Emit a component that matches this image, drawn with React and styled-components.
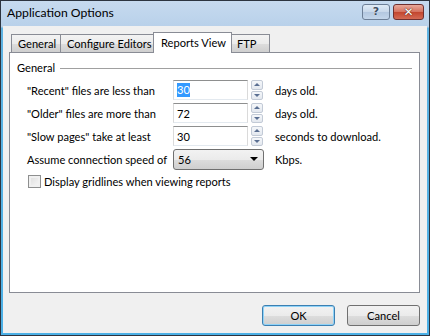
import React from 'react';
import styled, { createGlobalStyle, css } from 'styled-components';

const Global = createGlobalStyle`
  html, body { margin: 0; padding: 0; background: #fff; }
  body {
    font-family: Lato, "Noto Sans", sans-serif;
    font-size: 11.1px;
    color: #000;
    white-space: nowrap;
  }
`;

const Window = styled.div`
  width: 430px;
  height: 336px;
  box-sizing: border-box;
  border: 1px solid #2c3440;
  background: linear-gradient(#c2d7ee, #b7cfe9 26px, #5fb3e2 27px, #4cb0e6);
  display: flex;
  flex-direction: column;
  overflow: hidden;
`;

const TitleBar = styled.div`
  height: 25px;
  display: flex;
  align-items: center;
  padding: 0 5px 0 6px;
  background: linear-gradient(#c6daef, #b9d1ea);
`;

const Title = styled.div`
  flex: 1;
  font-size: 12.2px;
  margin-top: -2px;
`;

const CaptionButton = styled.div`
  height: 16px;
  box-sizing: border-box;
  border: 1px solid #6d7f97;
  border-radius: 3px;
  display: flex;
  align-items: center;
  justify-content: center;
  margin-top: -4px;
  font-weight: bold;
  font-family: "DejaVu Sans", sans-serif;
  ${p => p.$close ? css`
    width: 31px;
    margin-left: 3px;
    border-color: #6e3030;
    background: linear-gradient(#e9a99a, #d4705e 50%, #c2452e 51%, #d46a54);
    color: #fff;
    font-size: 12px;
    text-shadow: 0 0 1px #4a1a10, 0 0 1px #4a1a10;
  ` : css`
    width: 28px;
    background: linear-gradient(#e0ebf6, #c7d7ea 50%, #b3c7e0 51%, #c4d6eb);
    color: #3e4d62;
    font-size: 11px;
    text-shadow: 0 0 1px #fff;
  `}
`;

const Client = styled.div`
  flex: 1;
  margin: 0 2px 2px 2px;
  background: #f0f0f0;
  display: flex;
  flex-direction: column;
  padding: 6px 7px 7px 6px;
`;

const TabRow = styled.div`
  display: flex;
  align-items: flex-end;
  height: 20px;
  padding-left: 2px;
  position: relative;
  z-index: 1;
`;

const Tab = styled.div`
  box-sizing: border-box;
  border: 1px solid #898c95;
  border-bottom: none;
  margin-right: -1px;
  display: flex;
  align-items: center;
  width: ${p => p.$w}px;
  padding-left: ${p => p.$pad || 6}px;
  ${p => p.$active ? css`
    height: 21px;
    margin-bottom: -1px;
    padding-bottom: 2px;
    background: #fff;
    position: relative;
    z-index: 2;
  ` : css`
    height: 18px;
    background: linear-gradient(#f3f3f3, #ebebeb 50%, #dddddd 51%, #cfcfcf);
  `}
`;

const Panel = styled.div`
  height: 241px;
  box-sizing: border-box;
  border: 1px solid #898c95;
  background: #fff;
  padding: 8px 7px 0 7px;
`;

const GroupHead = styled.div`
  display: flex;
  align-items: center;
  height: 13px;
  margin-bottom: 6px;
  &::after {
    content: "";
    flex: 1;
    height: 1px;
    background: #a0a0a0;
    margin-left: 5px;
    margin-top: 1px;
  }
`;

const Rows = styled.div`
  padding-left: 10px;
  display: flex;
  flex-direction: column;
  gap: 3px;
`;

const Row = styled.div`
  display: flex;
  align-items: center;
  height: 20px;
`;

const Label = styled.div`
  width: 146px;
`;

const NumberBox = styled.div`
  width: 75px;
  height: 20px;
  box-sizing: border-box;
  border: 1px solid #abadb3;
  border-top-color: #8e8f8f;
  border-left-color: #dadada;
  border-right-color: #dadada;
  border-bottom-color: #e3e9ef;
  display: flex;
  align-items: center;
  padding-left: 3px;
`;

const Selected = styled.span`
  background: #3399ff;
  color: #fff;
  line-height: 14px;
`;

const Spinner = styled.div`
  width: 12px;
  height: 20px;
  margin-left: 3px;
  display: flex;
  flex-direction: column;
  gap: 1px;
`;

const SpinHalf = styled.div`
  flex: 1;
  box-sizing: border-box;
  border: 1px solid #c2cad6;
  border-radius: 2px;
  background: linear-gradient(#f5f7fa, #e3e8ef);
  display: flex;
  align-items: center;
  justify-content: center;
  &::before {
    content: "";
    border-left: 3px solid transparent;
    border-right: 3px solid transparent;
    ${p => p.$down
      ? css`border-top: 3px solid #5a6f92;`
      : css`border-bottom: 3px solid #5a6f92;`}
  }
`;

const Unit = styled.div`
  margin-left: ${p => p.$gap || 12}px;
`;

const Combo = styled.div`
  width: 91px;
  height: 21px;
  box-sizing: border-box;
  border: 1px solid #707070;
  border-radius: 3px;
  background: linear-gradient(#f2f2f2, #ebebeb 50%, #dddddd 51%, #cfcfcf);
  display: flex;
  align-items: center;
  padding: 0 5px 0 4px;
  &::after {
    content: "";
    margin-left: auto;
    border-left: 4px solid transparent;
    border-right: 4px solid transparent;
    border-top: 4px solid #000;
  }
`;

const CheckRow = styled.label`
  display: flex;
  align-items: center;
  margin-top: 3px;
  margin-left: 1px;
`;

const Box = styled.span`
  width: 13px;
  height: 13px;
  box-sizing: border-box;
  border: 1px solid #8e8f8f;
  background: linear-gradient(135deg, #dcdcdc, #f8f8f8);
  box-shadow: inset 0 0 0 2px #f0f0f0;
  margin-right: 3px;
`;

const Footer = styled.div`
  margin-top: auto;
  display: flex;
  justify-content: flex-end;
  gap: 12px;
`;

const Button = styled.div`
  width: 73px;
  height: 21px;
  box-sizing: border-box;
  border: 1px solid ${p => p.$default ? '#3c7fb1' : '#707070'};
  border-radius: 3px;
  background: linear-gradient(#f2f2f2, #ebebeb 50%, #dddddd 51%, #cfcfcf);
  ${p => p.$default && css`box-shadow: inset 0 0 0 1px #8fd3f8;`}
  display: flex;
  align-items: center;
  justify-content: center;
`;

const rows = [
  { label: '"Recent" files are less than', value: '30', unit: 'days old.', selected: true },
  { label: '"Older" files are more than', value: '72', unit: 'days old.' },
  { label: '"Slow pages" take at least', value: '30', unit: 'seconds to download.' },
];

const tabs = [
  { name: 'General', w: 50 },
  { name: 'Configure Editors', w: 94 },
  { name: 'Reports View', w: 79, active: true, pad: 7 },
  { name: 'FTP', w: 39, pad: 5 },
];

export default function App() {
  return (
    <>
      <Global />
      <Window>
        <TitleBar>
          <Title>Application Options</Title>
          <CaptionButton>?</CaptionButton>
          <CaptionButton $close>✕</CaptionButton>
        </TitleBar>
        <Client>
          <TabRow>
            {tabs.map(t => (
              <Tab key={t.name} $w={t.w} $pad={t.pad} $active={t.active}>{t.name}</Tab>
            ))}
          </TabRow>
          <Panel>
            <GroupHead>General</GroupHead>
            <Rows>
              {rows.map(r => (
                <Row key={r.label}>
                  <Label>{r.label}</Label>
                  <NumberBox>{r.selected ? <Selected>{r.value}</Selected> : r.value}</NumberBox>
                  <Spinner>
                    <SpinHalf />
                    <SpinHalf $down />
                  </Spinner>
                  <Unit>{r.unit}</Unit>
                </Row>
              ))}
              <Row>
                <Label>Assume connection speed of</Label>
                <Combo>56</Combo>
                <Unit $gap={11}>Kbps.</Unit>
              </Row>
              <CheckRow>
                <Box />
                Display gridlines when viewing reports
              </CheckRow>
            </Rows>
          </Panel>
          <Footer>
            <Button $default>OK</Button>
            <Button>Cancel</Button>
          </Footer>
        </Client>
      </Window>
    </>
  );
}
